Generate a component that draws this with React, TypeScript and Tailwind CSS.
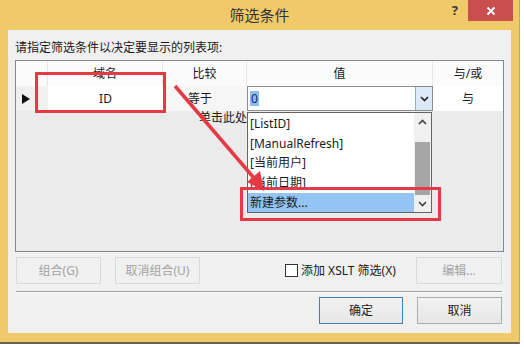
import React from "react";

const font = { fontFamily: '"Noto Sans", "Noto Sans CJK SC", sans-serif' };

function ChevronUp() {
  return (
    <svg width="9" height="6" viewBox="0 0 9 6">
      <path d="M1 5 L4.5 1.5 L8 5" stroke="#404040" strokeWidth="1.6" fill="none" />
    </svg>
  );
}
function ChevronDown({ color = "#404040" }: { color?: string }) {
  return (
    <svg width="9" height="6" viewBox="0 0 9 6">
      <path d="M1 1 L4.5 4.5 L8 1" stroke={color} strokeWidth="1.6" fill="none" />
    </svg>
  );
}

export default function App() {
  return (
    <div className="relative w-[524px] h-[347px] bg-white overflow-hidden" style={font}>
      {/* window */}
      <div className="flex flex-col w-[520px] h-[344px] bg-[#f0c96a] border-b-2 border-r border-b-[#6b6152] border-r-[#c9a755]">
        {/* title bar */}
        <div className="relative h-[30px] flex items-center justify-center">
          <span className="text-[15px] text-[#333] leading-none mt-[1px]">筛选条件</span>
          <div className="absolute top-0 right-[6px] flex items-start">
            <span className="mt-[4px] mr-[10px] text-[13px] font-bold text-[#3a3a3a] leading-none">?</span>
            <div className="w-[45px] h-[21px] bg-[#c94f4f] flex items-center justify-center">
              <svg width="10" height="10" viewBox="0 0 10 10">
                <path d="M1.5 1.5 L8.5 8.5 M8.5 1.5 L1.5 8.5" stroke="white" strokeWidth="1.8" />
              </svg>
            </div>
          </div>
        </div>
        {/* client */}
        <div className="flex-1 mx-[8px] mb-[9px] bg-[#f0f0f0] flex flex-col px-[7px]">
          <div className="pt-[10px] text-[12px] leading-[16px] text-[#1a1a1a]">请指定筛选条件以决定要显示的列表项:</div>
          {/* grid */}
          <div className="relative mt-[4px] w-[489px] h-[192px] border border-[#828790] bg-[#ebebeb] flex flex-col text-[12px] text-[#1a1a1a]">
            <div className="flex h-[25px] bg-[#fbfbfb]">
              <div className="w-[32px] border-r border-[#e6e6e6]" />
              <div className="w-[115px] flex items-center justify-center border-r border-[#e6e6e6]">域名</div>
              <div className="w-[84px] flex items-center justify-center border-r border-[#e6e6e6]">比较</div>
              <div className="w-[186px] flex items-center justify-center border-r border-[#e6e6e6]">值</div>
              <div className="w-[70px] flex items-center justify-center">与/或</div>
            </div>
            <div className="flex h-[25px] bg-[#f4f4f4]">
              <div className="w-[32px] flex items-center pl-[6px] bg-[#f0f0f0]">
                <svg width="8" height="10" viewBox="0 0 8 10">
                  <path d="M0 0 L8 5 L0 10 Z" fill="#111" />
                </svg>
              </div>
              <div className="w-[115px] flex items-center justify-center bg-white">ID</div>
              <div className="w-[84px] flex items-center justify-center pr-[10px] bg-[#f6f6f6]">等于</div>
              <div className="w-[186px] flex h-[25px] border border-[#8c8c8c] bg-white">
                <div className="flex-1 flex items-center pl-[2px]">
                  <span className="bg-[#8fbcec] text-[#0d2d66] leading-[15px] px-[1px]">0</span>
                </div>
                <div className="w-[17px] flex items-center justify-center bg-[#dceaf8] border-l border-[#7fb0e0]">
                  <ChevronDown color="#222" />
                </div>
              </div>
              <div className="w-[70px] flex items-center justify-center bg-white">与</div>
            </div>
            <div className="h-[14px] flex items-center pl-[183px] leading-none whitespace-nowrap">单击此处</div>
            <div className="flex-1 bg-[#ebebeb]" />

            {/* dropdown list */}
            <div className="absolute left-[231px] top-[51px] w-[185px] h-[101px] border border-[#646464] bg-white flex">
              <div className="flex-1 flex flex-col pt-[1px]">
                <div className="h-[20px] flex items-center pl-[2px]">[ListID]</div>
                <div className="h-[20px] flex items-center pl-[2px]">[ManualRefresh]</div>
                <div className="h-[20px] flex items-center pl-[2px]">[当前用户]</div>
                <div className="h-[20px] flex items-center pl-[2px]">[当前日期]</div>
                <div className="h-[19px] flex items-center pl-[2px] bg-[#93c4f4]">新建参数...</div>
              </div>
              <div className="w-[17px] flex flex-col bg-[#f0f0f0]">
                <div className="h-[17px] flex items-center justify-center">
                  <ChevronUp />
                </div>
                <div className="h-[12px]" />
                <div className="h-[53px] mx-[1px] bg-[#a6a6a6]" />
                <div className="flex-1 flex items-center justify-center">
                  <ChevronDown />
                </div>
              </div>
            </div>
          </div>
          {/* button row */}
          <div className="mt-[5px] flex items-center h-[27px] text-[12px]">
            <div className="w-[85px] h-[27px] ml-[1px] border border-[#d9d9d9] flex items-center justify-center text-[#a3a3a3]">组合(G)</div>
            <div className="w-[85px] h-[27px] ml-[14px] border border-[#d9d9d9] flex items-center justify-center text-[#a3a3a3]">取消组合(U)</div>
            <div className="ml-[85px] flex items-center">
              <div className="w-[13px] h-[13px] border border-[#333] bg-white" />
              <span className="ml-[3px] text-[#1a1a1a]">添加 XSLT 筛选(X)</span>
            </div>
            <div className="w-[86px] h-[27px] ml-auto mr-[2px] border border-[#d9d9d9] flex items-center justify-center text-[#a3a3a3]">编辑...</div>
          </div>
          <div className="mt-[7px] ml-[1px] w-[486px] h-[1px] bg-[#a0a0a0]" />
          <div className="h-[1px] ml-[1px] w-[486px] bg-white" />
          <div className="mt-[4px] flex justify-end h-[27px] text-[12px] text-[#1a1a1a] pr-[2px]">
            <div className="w-[84px] h-[27px] border border-[#3c7fb1] bg-gradient-to-b from-[#f2f2f2] to-[#e6e6e6] flex items-center justify-center">确定</div>
            <div className="w-[85px] h-[27px] ml-[14px] border border-[#acacac] bg-gradient-to-b from-[#f2f2f2] to-[#e6e6e6] flex items-center justify-center">取消</div>
          </div>
        </div>
      </div>

      {/* annotations */}
      <div className="absolute left-[35px] top-[72px] w-[131px] h-[41px] border-[3px] border-[#e63946]" />
      <div className="absolute left-[240px] top-[187px] w-[201px] h-[34px] border-[3px] border-[#e63946]" />
      <svg className="absolute left-0 top-0" width="524" height="347" viewBox="0 0 524 347">
        <line x1="175" y1="86" x2="254" y2="178" stroke="#e63946" strokeWidth="3.5" />
        <polygon points="264,191 247,182 260,171" fill="#e63946" />
      </svg>
    </div>
  );
}
